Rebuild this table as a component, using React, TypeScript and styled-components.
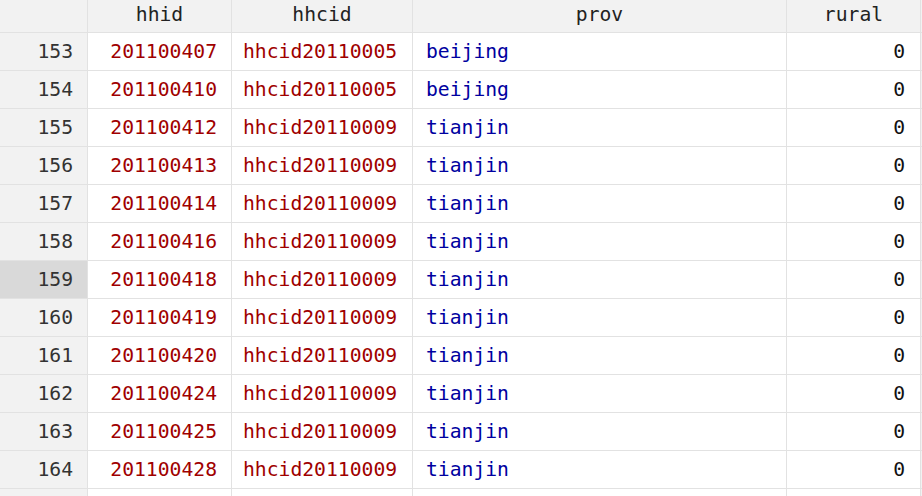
import React from "react";
import styled, { createGlobalStyle } from "styled-components";

const Global = createGlobalStyle`
  html, body { margin: 0; padding: 0; background: #ffffff; overflow: hidden; }
  body { font-family: "DejaVu Sans Mono", "Liberation Mono", monospace; }
`;

const COLS = "88px 144px 181px 374px 134px 1fr";

const Grid = styled.div`
  width: 922px;
  height: 496px;
  overflow: hidden;
  background: #ffffff;
  font-family: "DejaVu Sans Mono", "Liberation Mono", monospace;
  font-size: 19.7px;
  font-variant-numeric: slashed-zero;
  font-feature-settings: "zero" 1;
`;

const HeaderRow = styled.div`
  display: grid;
  grid-template-columns: ${COLS};
  height: 33px;
  background: #f2f2f2;
  border-bottom: 1px solid #e2e2e2;
  box-sizing: border-box;
`;

const HeadCell = styled.div`
  display: flex;
  align-items: center;
  justify-content: center;
  border-right: 1px solid #e2e2e2;
  color: #222222;
  padding-bottom: 4px;
  box-sizing: border-box;
`;

const Row = styled.div`
  display: grid;
  grid-template-columns: ${COLS};
  height: 38px;
  border-bottom: 1px solid #e2e2e2;
  box-sizing: border-box;
`;

type Align = "left" | "right";

const Cell = styled.div<{ $align: Align; $color: string; $pad: number }>`
  display: flex;
  align-items: center;
  justify-content: ${(p) => (p.$align === "right" ? "flex-end" : "flex-start")};
  padding: ${(p) => (p.$align === "right" ? `0 ${p.$pad}px 0 0` : `0 0 0 ${p.$pad}px`)};
  border-right: 1px solid #e2e2e2;
  color: ${(p) => p.$color};
  box-sizing: border-box;
  white-space: nowrap;
`;

const RowNum = styled.div<{ $selected: boolean }>`
  display: flex;
  align-items: center;
  justify-content: flex-end;
  padding-right: 14px;
  background: ${(p) => (p.$selected ? "#d9d9d9" : "#f2f2f2")};
  border-right: 1px solid #e2e2e2;
  color: #333333;
  box-sizing: border-box;
`;

const Filler = styled.div`
  background: #f2f2f2;
`;

const rows: [number, string, string, string, number][] = [
  [153, "201100407", "hhcid20110005", "beijing", 0],
  [154, "201100410", "hhcid20110005", "beijing", 0],
  [155, "201100412", "hhcid20110009", "tianjin", 0],
  [156, "201100413", "hhcid20110009", "tianjin", 0],
  [157, "201100414", "hhcid20110009", "tianjin", 0],
  [158, "201100416", "hhcid20110009", "tianjin", 0],
  [159, "201100418", "hhcid20110009", "tianjin", 0],
  [160, "201100419", "hhcid20110009", "tianjin", 0],
  [161, "201100420", "hhcid20110009", "tianjin", 0],
  [162, "201100424", "hhcid20110009", "tianjin", 0],
  [163, "201100425", "hhcid20110009", "tianjin", 0],
  [164, "201100428", "hhcid20110009", "tianjin", 0],
];

const RED = "#a00000";
const BLUE = "#0000a0";

export default function App() {
  return (
    <>
      <Global />
      <Grid>
        <HeaderRow>
          <HeadCell />
          <HeadCell>hhid</HeadCell>
          <HeadCell>hhcid</HeadCell>
          <HeadCell>prov</HeadCell>
          <HeadCell>rural</HeadCell>
          <Filler />
        </HeaderRow>
        {rows.map(([n, hhid, hhcid, prov, rural]) => (
          <Row key={n}>
            <RowNum $selected={n === 159}>{n}</RowNum>
            <Cell $align="right" $color={RED} $pad={14}>{hhid}</Cell>
            <Cell $align="left" $color={RED} $pad={11}>{hhcid}</Cell>
            <Cell $align="left" $color={BLUE} $pad={13}>{prov}</Cell>
            <Cell $align="right" $color="#111111" $pad={15}>{rural}</Cell>
            <Filler />
          </Row>
        ))}
        <Row>
          <RowNum $selected={false} />
          <Cell $align="left" $color={RED} $pad={0} />
          <Cell $align="left" $color={RED} $pad={0} />
          <Cell $align="left" $color={BLUE} $pad={0} />
          <Cell $align="left" $color="#111" $pad={0} />
          <Filler />
        </Row>
      </Grid>
    </>
  );
}
